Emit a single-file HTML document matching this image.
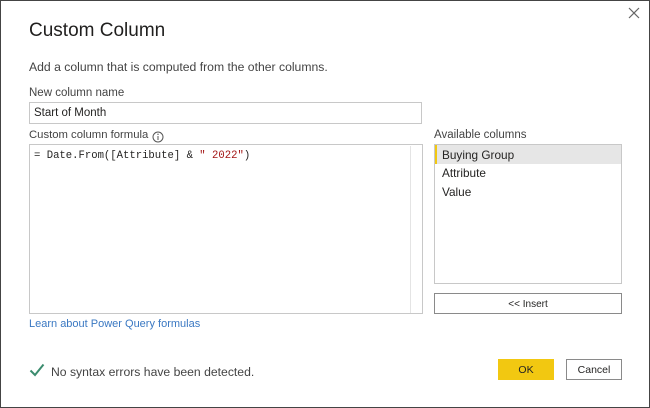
<!DOCTYPE html>
<html><head><style>
*{box-sizing:border-box;margin:0;padding:0}
body{width:650px;height:408px;background:#fff;font-family:"Liberation Sans",sans-serif;color:#252423;position:relative;overflow:hidden}
.frame{position:absolute;left:0;top:0;width:650px;height:408px;border:1px solid #444}
.a{position:absolute;white-space:nowrap}
.box{position:absolute;border:1px solid #c8c8c8;background:#fff}
</style></head><body>
<div class="frame"></div>
<div class="a" style="left:29px;top:20px;font-size:19px;color:#201f1e">Custom Column</div>
<svg class="a" style="left:628px;top:7px" width="12" height="12"><path d="M1 1L11 11M11 1L1 11" stroke="#666" stroke-width="1.2"/></svg>
<div class="a" style="left:29px;top:60px;font-size:12.2px;color:#444">Add a column that is computed from the other columns.</div>
<div class="a" style="left:29px;top:87px;font-size:11.5px;color:#444">New column name</div>
<div class="box" style="left:29px;top:102px;width:393px;height:22px"></div>
<div class="a" style="left:34px;top:107px;font-size:11.5px;color:#252423">Start of Month</div>
<div class="a" style="left:29px;top:129px;font-size:11.3px;color:#444">Custom column formula</div>
<svg class="a" style="left:152px;top:131px" width="12" height="12"><circle cx="6" cy="6" r="5" fill="none" stroke="#555"/><path d="M6 5v4" stroke="#555"/><circle cx="6" cy="3.3" r=".7" fill="#555"/></svg>
<div class="box" style="left:29px;top:144px;width:394px;height:170px"></div>
<div class="a" style="left:410px;top:146px;width:1px;height:167px;background:#e4e4e4"></div>
<div class="a" style="left:34px;top:150px;font-size:10.6px;font-family:'Liberation Mono',monospace;color:#252423">= Date.From([Attribute] &amp; <span style="color:#a31515">" 2022"</span>)</div>
<div class="a" style="left:434px;top:129px;font-size:11.5px;color:#444">Available columns</div>
<div class="box" style="left:434px;top:144px;width:188px;height:140px"></div>
<div class="a" style="left:435px;top:145px;width:186px;height:19px;background:#e6e6e6;border-left:2px solid #f2c811"></div>
<div class="a" style="left:442px;top:148px;font-size:11.8px">Buying Group</div>
<div class="a" style="left:442px;top:166px;font-size:11.8px">Attribute</div>
<div class="a" style="left:442px;top:185px;font-size:11.8px">Value</div>
<div class="box" style="left:434px;top:293px;width:188px;height:21px;border-color:#8a8a8a;text-align:center;font-size:10px;line-height:21px">&lt;&lt; Insert</div>
<div class="a" style="left:29px;top:318px;font-size:11px;color:#3a78c2">Learn about Power Query formulas</div>
<svg class="a" style="left:29px;top:363px" width="16" height="14"><path d="M1.5 7.5L6 12L14.5 1.5" fill="none" stroke="#3b8c6e" stroke-width="2"/></svg>
<div class="a" style="left:51px;top:365px;font-size:12.2px;color:#444">No syntax errors have been detected.</div>
<div class="a" style="left:498px;top:359px;width:56px;height:21px;background:#f2c811;text-align:center;font-size:10.5px;line-height:22px">OK</div>
<div class="box" style="left:566px;top:359px;width:56px;height:21px;border-color:#8a8a8a;text-align:center;font-size:10.5px;line-height:20px">Cancel</div>
</body></html>
